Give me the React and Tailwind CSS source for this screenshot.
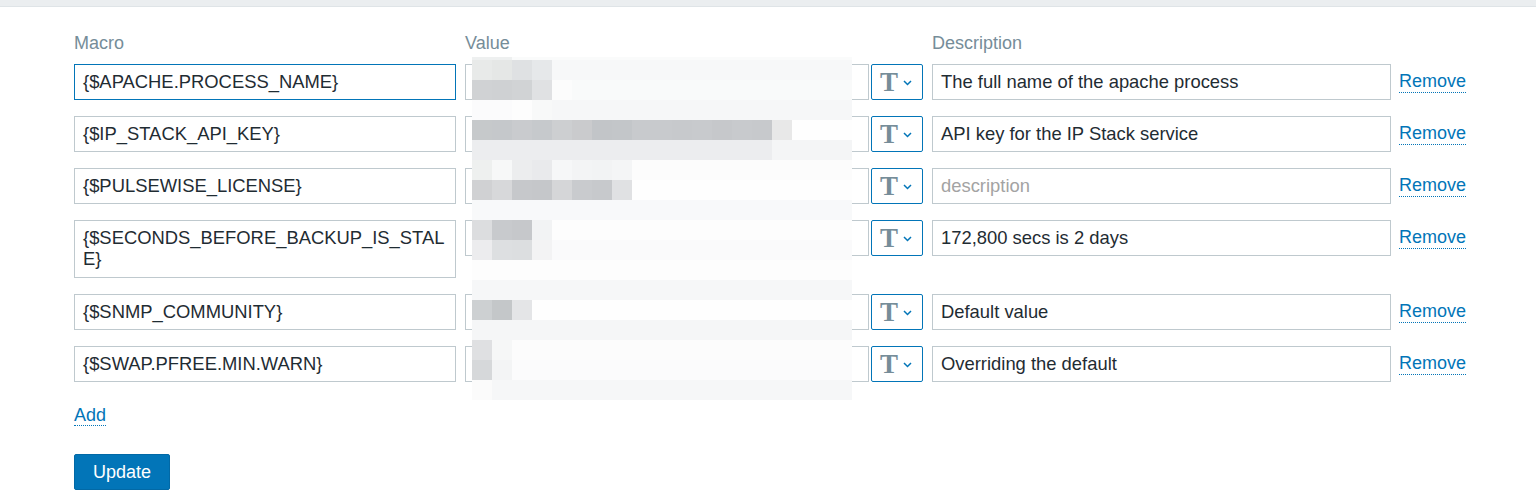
import React from 'react';

const macros = [
  { name: '{$APACHE.PROCESS_NAME}', desc: 'The full name of the apache process', focused: true },
  { name: '{$IP_STACK_API_KEY}', desc: 'API key for the IP Stack service' },
  { name: '{$PULSEWISE_LICENSE}', desc: '' },
  { name: ['{$SECONDS_BEFORE_BACKUP_IS_STAL', 'E}'], desc: '172,800 secs is 2 days' },
  { name: '{$SNMP_COMMUNITY}', desc: 'Default value' },
  { name: '{$SWAP.PFREE.MIN.WARN}', desc: 'Overriding the default' },
];

const fill = (head, rest) => [...head, ...Array(19 - head.length).fill(rest)];

// pixelated blur laid over the secret values
const mosaic = [
  fill(['#e8eae9', '#e5e7e6', '#dfe1e3', '#e6e8ea'], '#f7f8f9'),
  fill(['#d0d2d4', '#cfd1d3', '#d1d3d5', '#e0e1e3', '#fcfcfc'], '#f9fafa'),
  fill(['#fbfbfc', '#fbfbfc', '#fdfdfd', '#f8f9f9'], '#f6f7f8'),
  fill(
    ['#c6c9cb', '#c5c8cb', '#c9cbce', '#c6c9cc', '#cdcfd1', '#cacbcd', '#c2c5c8', '#c3c6c9', '#c8cacd', '#c8cacd', '#c7c9cc', '#c8cacd', '#c6c8cb', '#c8cacd', '#c7c9cc', '#e8e8e8'],
    '#fefefe'
  ),
  fill(Array(15).fill('#ecedef'), '#f4f5f6'),
  fill(['#eef0ef', '#f7f8f8', '#ecedee', '#e9eaec', '#f6f7f8', '#f3f4f5', '#f2f3f4', '#f4f5f6'], '#fcfcfc'),
  fill(['#d0d1d3', '#d7d8da', '#c6c8cb', '#c5c7ca', '#d5d6d8', '#c9cbce', '#c7c9cc', '#e0e1e3'], '#fefefe'),
  fill([], '#f8f9fa'),
  fill(['#dcdddf', '#c8cacd', '#c6c8cb', '#f2f3f4'], '#fdfdfd'),
  fill(['#ececee', '#dddfe1', '#dcdee0', '#f3f3f4'], '#fafafb'),
  fill([], '#fdfdfd'),
  fill([], '#f6f7f8'),
  fill(['#cdd0d2', '#c4c7c9', '#e4e5e7'], '#fefefe'),
  fill([], '#f5f6f7'),
  fill(['#dfe0e2', '#f6f7f7'], '#fcfcfc'),
  fill(['#d6d8da', '#f3f4f5'], '#fbfbfc'),
  fill(['#fbfbfb'], '#f6f7f8'),
];

function TypeButton() {
  return (
    <div className="w-[52px] h-[36px] shrink-0 border border-[#0275b8] rounded-[2px] flex items-center pl-[8px] gap-[5px] bg-white">
      <span className="font-['Liberation_Serif',serif] font-bold text-[27px] leading-none text-[#768d99]">T</span>
      <svg width="9" height="6" viewBox="0 0 9 6" className="mt-[2px]">
        <polyline points="1,1 4.5,4.5 8,1" fill="none" stroke="#0275b8" strokeWidth="1.5" />
      </svg>
    </div>
  );
}

function Row({ item }) {
  const tall = Array.isArray(item.name);
  return (
    <div className="flex items-start">
      <div
        className={[
          'w-[382px] shrink-0 border px-[8px] text-[#1f2c33] text-[18.4px] bg-white',
          item.focused ? 'border-[#0275b8]' : 'border-[#bfc9ce]',
          tall ? 'h-[58px] pt-[6px] leading-[21px]' : 'h-[36px] flex items-center',
        ].join(' ')}
      >
        {tall ? (
          <>
            {item.name[0]}
            <br />
            {item.name[1]}
          </>
        ) : (
          item.name
        )}
      </div>
      <div className="ml-[9px] w-[404px] h-[36px] shrink-0 border border-[#bfc9ce] bg-white" />
      <div className="ml-[2px]">
        <TypeButton />
      </div>
      <div className="ml-[9px] w-[459px] h-[36px] shrink-0 border border-[#bfc9ce] bg-white px-[8px] flex items-center text-[18.4px]">
        {item.desc ? (
          <span className="text-[#1f2c33]">{item.desc}</span>
        ) : (
          <span className="text-[#a3a3a3]">description</span>
        )}
      </div>
      <div className="ml-[8px] h-[36px] flex items-center">
        <span className="text-[#0275b8] leading-[21px] border-b border-dotted border-[#0275b8]">Remove</span>
      </div>
    </div>
  );
}

export default function App() {
  return (
    <div className="min-h-[504px] bg-white font-['Liberation_Sans',Arial,sans-serif] text-[18px]">
      <div className="h-[6px] bg-[#ebeef0] border-b border-[#dfe4e7] box-content" />
      <div className="pl-[74px] pt-[26px]">
        <div className="flex text-[#768d99] leading-[21px] mb-[10px]">
          <div className="w-[391px]">Macro</div>
          <div className="w-[467px]">Value</div>
          <div>Description</div>
        </div>
        <div className="relative">
          <div className="flex flex-col gap-4">
            {macros.map((m, i) => (
              <Row key={i} item={m} />
            ))}
          </div>
          <div className="absolute left-[398px] -top-[7px] w-[380px]">
            <div className="h-[3px] flex">
              <div className="w-[40px] bg-[#eef0f0]" />
              <div className="flex-1 bg-[#fafbfb]" />
            </div>
            {mosaic.map((row, r) => (
              <div key={r} className="flex h-[20px]">
                {row.map((c, k) => (
                  <div key={k} className="w-[20px] h-[20px]" style={{ backgroundColor: c }} />
                ))}
              </div>
            ))}
          </div>
        </div>
        <div className="mt-[20px]">
          <span className="text-[#0275b8] leading-[21px] border-b border-dotted border-[#0275b8]">Add</span>
        </div>
        <button
          type="button"
          className="mt-[25px] w-[96px] h-[36px] rounded-[2px] bg-[#0275b8] border border-[#0269a6] text-white text-[18px]"
        >
          Update
        </button>
      </div>
    </div>
  );
}
